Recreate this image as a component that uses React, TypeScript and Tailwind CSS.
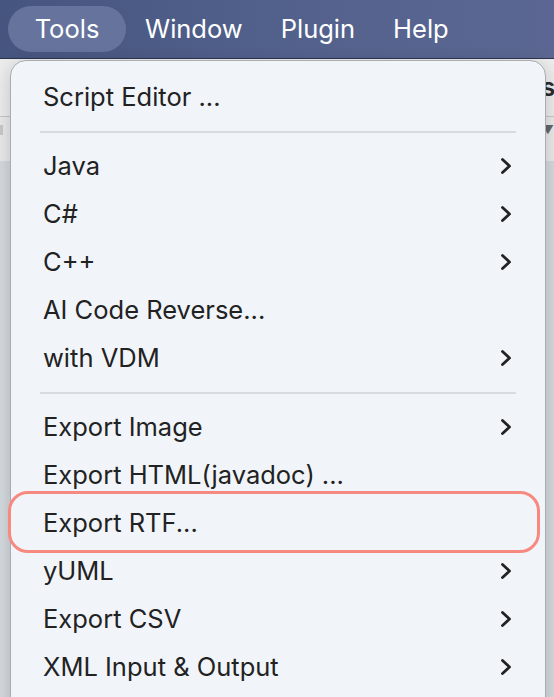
const font = { fontFamily: 'Inter, "Noto Sans", sans-serif' };

type Item = { label: string; sub?: boolean; highlight?: boolean } | 'sep';

const items: Item[] = [
  { label: 'Script Editor ...' },
  'sep',
  { label: 'Java', sub: true },
  { label: 'C#', sub: true },
  { label: 'C++', sub: true },
  { label: 'AI Code Reverse...' },
  { label: 'with VDM', sub: true },
  'sep',
  { label: 'Export Image', sub: true },
  { label: 'Export HTML(javadoc) ...' },
  { label: 'Export RTF...', highlight: true },
  { label: 'yUML', sub: true },
  { label: 'Export CSV', sub: true },
  { label: 'XML Input & Output', sub: true },
];

function Chevron() {
  return (
    <svg width="14" height="18" viewBox="0 0 14 18" fill="none" className="text-[#222]">
      <path d="M3.5 2.5l7 6.5-7 6.5" stroke="currentColor" strokeWidth="2.8" strokeLinecap="round" strokeLinejoin="round" />
    </svg>
  );
}

export default function App() {
  return (
    <div className="relative w-[554px] h-[697px] overflow-hidden bg-[#d4d9de]" style={font}>
      {/* menu bar */}
      <div className="h-[59px] flex items-center pl-[8px] bg-gradient-to-r from-[#46557f] via-[#52618c] to-[#5b6792] border-b border-[#2c3450] text-white text-[25.5px]">
        <div className="h-[46px] w-[118px] rounded-full bg-[#66749d] flex items-center justify-center">Tools</div>
        <div className="ml-[19px]">Window</div>
        <div className="ml-[38px]">Plugin</div>
        <div className="ml-[38px]">Help</div>
      </div>

      {/* window behind the menu */}
      <div className="h-[58px] bg-[#ececec] border-b border-[#c6c6c6] flex justify-end items-center">
        <span className="text-[25px] font-semibold text-[#2a2a2a] -mr-[10px]">st</span>
      </div>
      <div className="h-[44px] bg-[#e9e9e9] flex justify-between items-start pt-[8px]">
        <div className="w-[3px] h-[10px] bg-[#c8c8c8]" />
        <span className="text-[12px] text-[#666] -mt-[4px]">▼</span>
      </div>

      {/* dropdown menu */}
      <div className="absolute left-[10px] top-[60px] w-[536px] h-[660px] rounded-t-[16px] bg-[#f1f5fa] border border-[#a9adb2] shadow-[0_4px_18px_rgba(0,0,0,0.18)] pt-[12px] text-[25.5px] text-[#222]">
        {items.map((it, i) =>
          it === 'sep' ? (
            <div key={i} className="h-[21px] flex items-center px-[29px]">
              <div className="h-[2px] w-full bg-[#d8dbe0]" />
            </div>
          ) : (
            <div key={i} className="relative h-[48px] flex items-center justify-between pl-[32px] pr-[32px]">
              <span>{it.label}</span>
              {it.sub && <Chevron />}
              {it.highlight && (
                <div className="absolute -left-[3px] right-[5px] -top-[8px] -bottom-[6px] rounded-[20px] border-[3px] border-[#f78a80]" />
              )}
            </div>
          )
        )}
      </div>
    </div>
  );
}
